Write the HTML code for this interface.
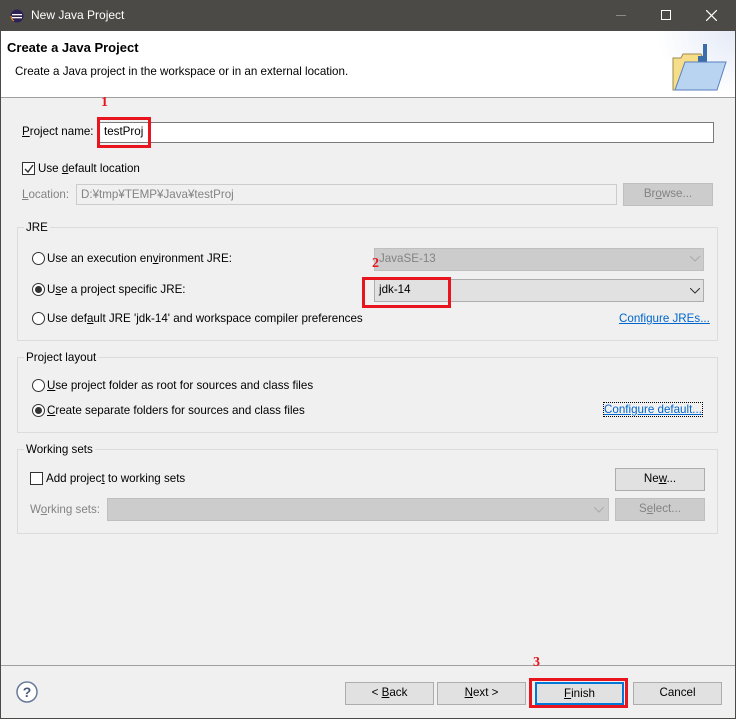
<!DOCTYPE html>
<html><head><meta charset="utf-8"><style>
*{box-sizing:border-box;margin:0;padding:0}
body{width:736px;height:719px;overflow:hidden;background:#f0f0f0;font-family:"Liberation Sans","Noto Sans CJK JP",sans-serif;font-size:11.6px;color:#000;position:relative}
.a{position:absolute;white-space:nowrap}
.win{position:absolute;left:0;top:0;width:736px;height:719px;border:1px solid #4b4a47;}
.title{position:absolute;left:0;top:0;width:736px;height:31px;background:#4b4a47;color:#fff}
.hdr{position:absolute;left:1px;top:31px;width:734px;height:67px;background:#fff;border-bottom:1px solid #a0a0a0}
.inp{position:absolute;background:#fff;border:1px solid #7a7a7a}
.dis{position:absolute;background:#f0f0f0;border:1px solid #ccc}
.btn{position:absolute;background:#e1e1e1;border:1px solid #adadad;text-align:center;line-height:20px}
.btnd{position:absolute;background:#ccc;border:1px solid #bfbfbf;text-align:center;line-height:20px;color:#838383}
.grp{position:absolute;border:1px solid #dcdcdc}
.leg{position:absolute;background:#f0f0f0;padding:0 2px}
.radio{position:absolute;width:13px;height:13px;border:1px solid #333;border-radius:50%;background:#fff}
.radio.on::after{content:"";position:absolute;left:2px;top:2px;width:7px;height:7px;border-radius:50%;background:#333}
.red{position:absolute;border:3px solid #e8141e}
.num{position:absolute;color:#e8141e;font-family:"Liberation Serif",serif;font-size:14px;font-weight:bold}
.lnk{color:#0066cc;text-decoration:underline}
u{text-decoration:underline}
</style></head><body>
<div class="win"></div>
<div class="title">
 <svg class="a" style="left:10px;top:9px" width="14" height="14"><circle cx="7" cy="7" r="6.5" fill="#2c2255"/><rect x="2" y="5" width="10" height="1.3" fill="#fff"/><rect x="2" y="8" width="10" height="1.3" fill="#fff"/><path d="M1 7a6 6 0 0 0 3 5" stroke="#f7941e" fill="none"/></svg>
 <div class="a" style="left:31px;top:8px;font-size:12px">New Java Project</div>
 <div class="a" style="left:616px;top:15px;width:10px;height:1px;background:#8a8986"></div>
 <div class="a" style="left:661px;top:10px;width:10px;height:10px;border:1px solid #fff"></div>
 <svg class="a" style="left:706px;top:10px" width="11" height="11"><path d="M0 0L11 11M11 0L0 11" stroke="#fff" stroke-width="1.2"/></svg>
</div>
<div class="hdr">
 <div class="a" style="left:6px;top:9px;font-weight:bold;font-size:13px">Create a Java Project</div>
 <div class="a" style="left:14px;top:34px">Create a Java project in the workspace or in an external location.</div>
 <div class="a" style="left:655px;top:0;width:79px;height:66px;background:radial-gradient(ellipse at 100% 0%,#e4eaf6 0%,#fff 70%)"></div>
 <svg class="a" style="left:670px;top:10px" width="60" height="50">
  <path d="M2 17h8l2-4h18l2 4h1v32H2z" fill="#f6dd8a" stroke="#9c8a50"/>
  <rect x="32" y="3" width="4" height="22" fill="#3a6ea8"/><rect x="27" y="15" width="5" height="10" fill="#3a6ea8"/>
  <path d="M4 49l10-28h41l-9 28z" fill="#b8d4f0" stroke="#5a7fbf"/>
 </svg>
</div>

<div class="num" style="left:101px;top:95px">1</div>
<div class="a" style="left:22px;top:125px"><u>P</u>roject name:</div>
<div class="inp" style="left:98px;top:122px;width:616px;height:21px"></div>
<div class="a" style="left:104px;top:125px">testProj</div>
<div class="red" style="left:97px;top:117px;width:54px;height:31px"></div>

<div class="a" style="left:22px;top:162px;width:13px;height:13px;border:1px solid #333;background:#fff"></div>
<svg class="a" style="left:24px;top:164px" width="10" height="10"><path d="M1 5l3 3 5-7" stroke="#333" stroke-width="1.4" fill="none"/></svg>
<div class="a" style="left:38px;top:162px">Use <u>d</u>efault location</div>
<div class="a" style="left:22px;top:188px;color:#838383"><u>L</u>ocation:</div>
<div class="dis" style="left:76px;top:184px;width:541px;height:21px"></div>
<div class="a" style="left:81px;top:188px;color:#838383">D:¥tmp¥TEMP¥Java¥testProj</div>
<div class="btnd" style="left:623px;top:183px;width:90px;height:23px">Br<u>o</u>wse...</div>

<div class="grp" style="left:17px;top:227px;width:701px;height:114px"></div>
<div class="leg" style="left:24px;top:221px">JRE</div>
<div class="radio" style="left:32px;top:252px"></div><div class="a" style="left:47px;top:252px">Use an execution en<u>v</u>ironment JRE:</div>
<div class="radio on" style="left:32px;top:283px"></div><div class="a" style="left:47px;top:283px">U<u>s</u>e a project specific JRE:</div>
<div class="radio" style="left:32px;top:312px"></div><div class="a" style="left:47px;top:312px">Use def<u>a</u>ult JRE 'jdk-14' and workspace compiler preferences</div>
<div class="btnd" style="left:374px;top:248px;width:330px;height:23px;text-align:left;padding-left:4px">JavaSE-13</div>
<svg class="a" style="left:690px;top:256px" width="10" height="6"><path d="M0 0l5 5 5-5" stroke="#aaa" fill="none"/></svg>
<div class="btn" style="left:374px;top:279px;width:330px;height:23px;text-align:left;padding-left:4px">jdk-14</div>
<svg class="a" style="left:690px;top:288px" width="10" height="6"><path d="M0 0l5 5 5-5" stroke="#333" fill="none"/></svg>
<div class="num" style="left:372px;top:256px">2</div>
<div class="red" style="left:362px;top:277px;width:89px;height:31px"></div>
<div class="a lnk" style="left:619px;top:312px">Configure JREs...</div>

<div class="grp" style="left:17px;top:357px;width:701px;height:76px"></div>
<div class="leg" style="left:24px;top:351px">Project layout</div>
<div class="radio" style="left:32px;top:379px"></div><div class="a" style="left:47px;top:379px"><u>U</u>se project folder as root for sources and class files</div>
<div class="radio on" style="left:32px;top:404px"></div><div class="a" style="left:47px;top:404px"><u>C</u>reate separate folders for sources and class files</div>
<div class="a lnk" style="left:604px;top:403px;outline:1px dotted #000">Configure default...</div>

<div class="grp" style="left:17px;top:449px;width:701px;height:85px"></div>
<div class="leg" style="left:24px;top:443px">Working sets</div>
<div class="a" style="left:30px;top:472px;width:13px;height:13px;border:1px solid #333;background:#fff"></div>
<div class="a" style="left:46px;top:472px">Add projec<u>t</u> to working sets</div>
<div class="btn" style="left:615px;top:468px;width:90px;height:23px">Ne<u>w</u>...</div>
<div class="a" style="left:30px;top:503px;color:#838383">W<u>o</u>rking sets:</div>
<div class="btnd" style="left:107px;top:498px;width:502px;height:23px"></div>
<svg class="a" style="left:594px;top:507px" width="10" height="6"><path d="M0 0l5 5 5-5" stroke="#aaa" fill="none"/></svg>
<div class="btnd" style="left:615px;top:498px;width:90px;height:23px">S<u>e</u>lect...</div>

<div class="a" style="left:1px;top:665px;width:734px;height:1px;background:#a0a0a0"></div>
<svg class="a" style="left:16px;top:681px" width="22" height="22"><circle cx="11" cy="11" r="10" fill="#fff" stroke="#6a7a9a" stroke-width="1.5"/><text x="11" y="16" font-size="14" font-weight="bold" text-anchor="middle" fill="#4a5a7a" font-family="Liberation Sans">?</text></svg>
<div class="btn" style="left:345px;top:682px;width:89px;height:23px">&lt; <u>B</u>ack</div>
<div class="btn" style="left:437px;top:682px;width:89px;height:23px"><u>N</u>ext &gt;</div>
<div class="btn" style="left:535px;top:682px;width:89px;height:23px;border:2px solid #0078d7;line-height:19px"><u>F</u>inish</div>
<div class="red" style="left:529px;top:678px;width:99px;height:30px"></div>
<div class="num" style="left:533px;top:655px">3</div>
<div class="btn" style="left:633px;top:682px;width:89px;height:23px">Cancel</div>
</body></html>
